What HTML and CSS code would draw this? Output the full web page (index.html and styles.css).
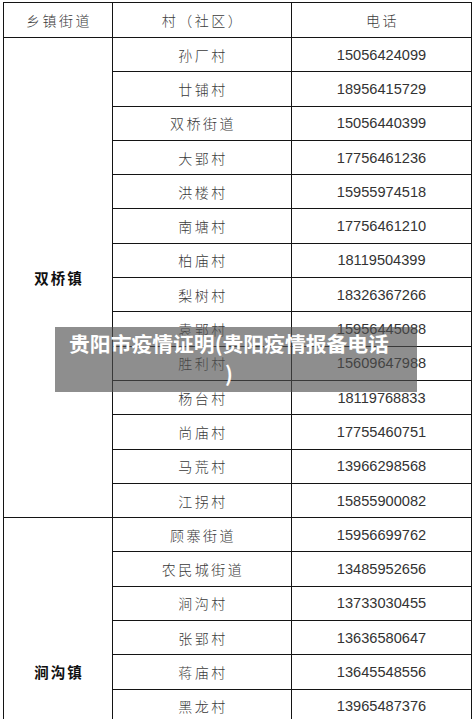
FILE: index.html
```html
<!DOCTYPE html>
<html lang="zh">
<head>
<meta charset="utf-8">
<link rel="stylesheet" href="styles.css">
</head>
<body>
<div class="page">
  <table class="grid">
    <colgroup><col class="c1"><col class="c2"><col class="c3"></colgroup>
    <thead>
      <tr class="head"><th>乡镇街道</th><th>村（社区）</th><th class="tel-h">电话</th></tr>
    </thead>
    <tbody>
      <tr><td class="town" rowspan="14">双桥镇</td><td class="vil">孙厂村</td><td class="num">15056424099</td></tr>
      <tr><td class="vil">廿铺村</td><td class="num">18956415729</td></tr>
      <tr><td class="vil">双桥街道</td><td class="num">15056440399</td></tr>
      <tr><td class="vil">大郢村</td><td class="num">17756461236</td></tr>
      <tr><td class="vil">洪楼村</td><td class="num">15955974518</td></tr>
      <tr><td class="vil">南塘村</td><td class="num">17756461210</td></tr>
      <tr><td class="vil">柏庙村</td><td class="num">18119504399</td></tr>
      <tr><td class="vil">梨树村</td><td class="num">18326367266</td></tr>
      <tr><td class="vil">袁郢村</td><td class="num">15956445088</td></tr>
      <tr><td class="vil">胜利村</td><td class="num">15609647988</td></tr>
      <tr><td class="vil">杨台村</td><td class="num">18119768833</td></tr>
      <tr><td class="vil">尚庙村</td><td class="num">17755460751</td></tr>
      <tr><td class="vil">马荒村</td><td class="num">13966298568</td></tr>
      <tr><td class="vil">江拐村</td><td class="num">15855900082</td></tr>
      <tr><td class="town" rowspan="9">涧沟镇</td><td class="vil">顾寨街道</td><td class="num">15956699762</td></tr>
      <tr><td class="vil">农民城街道</td><td class="num">13485952656</td></tr>
      <tr><td class="vil">涧沟村</td><td class="num">13733030455</td></tr>
      <tr><td class="vil">张郢村</td><td class="num">13636580647</td></tr>
      <tr><td class="vil">蒋庙村</td><td class="num">13645548556</td></tr>
      <tr><td class="vil">黑龙村</td><td class="num">13965487376</td></tr>
      <tr><td class="vil">&nbsp;</td><td class="num">&nbsp;</td></tr>
      <tr><td class="vil">&nbsp;</td><td class="num">&nbsp;</td></tr>
      <tr><td class="vil">&nbsp;</td><td class="num">&nbsp;</td></tr>
    </tbody>
  </table>
  <div class="caption">贵阳市疫情证明(贵阳疫情报备电话<br>)</div>
</div>
</body>
</html>
```

FILE: styles.css
```css
html, body {
  margin: 0;
  padding: 0;
  background: #ffffff;
  overflow: hidden;
}

.page {
  position: relative;
  width: 473px;
  height: 719px;
  overflow: hidden;
  padding: 2px 0 0 3px;
  box-sizing: border-box;
}

.grid {
  border-collapse: collapse;
  table-layout: fixed;
  width: 468px;
}

.c1 { width: 109px; }
.c2 { width: 179px; }
.c3 { width: 180px; }

.grid th,
.grid td {
  border: 1px solid #141414;
  padding: 0;
  text-align: center;
  vertical-align: middle;
  box-sizing: border-box;
}

.head th {
  height: 35px;
  font-family: "Noto Sans CJK SC", "Noto Sans", sans-serif;
  font-weight: 300;
  font-size: 14px;
  letter-spacing: 2.5px;
  color: #3c3c3c;
  text-indent: 2px;
}

.grid tbody td {
  height: 34.3px;
}

.vil {
  font-family: "Noto Sans CJK SC", "Noto Sans", sans-serif;
  font-weight: 300;
  font-size: 14px;
  letter-spacing: 2.5px;
  text-indent: 2px;
  color: #3a3a3a;
}

.num {
  font-family: "Liberation Sans", Arial, sans-serif;
  font-size: 14.6px;
  color: #333333;
}

.town {
  font-family: "Noto Sans CJK SC", "Noto Sans", sans-serif;
  font-weight: 700;
  font-size: 14.5px;
  letter-spacing: 2px;
  text-indent: 2px;
  color: #111111;
}

.caption {
  position: absolute;
  left: 55px;
  top: 327px;
  width: 362px;
  height: 65px;
  box-sizing: border-box;
  padding: 1px 14px 0 0;
  background: rgba(78, 78, 78, 0.64);
  color: #ffffff;
  font-family: "Noto Sans CJK SC", "Noto Sans", sans-serif;
  font-weight: 700;
  font-size: 20.8px;
  line-height: 30px;
  text-align: center;
  white-space: nowrap;
}
```
